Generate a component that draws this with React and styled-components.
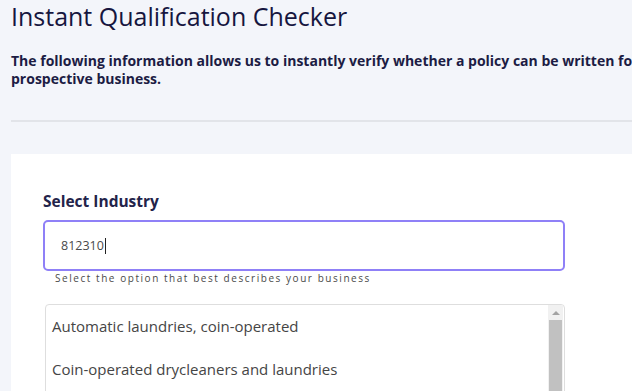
import styled, { createGlobalStyle } from "styled-components";

const GlobalStyle = createGlobalStyle`
  html, body {
    margin: 0;
    padding: 0;
    background: #ffffff;
    overflow: hidden;
  }
  body {
    font-family: "Open Sans", "Noto Sans", sans-serif;
  }
`;

const Page = styled.div`
  width: 632px;
  height: 391px;
  overflow: hidden;
  background: #f3f5fa;
  display: flex;
  flex-direction: column;
`;

const Header = styled.header`
  flex-shrink: 0;
  padding: 1px 0 0 11px;
`;

const Title = styled.h1`
  margin: 0;
  font-size: 25px;
  line-height: 30px;
  font-weight: 500;
  color: #16163f;
`;

const Intro = styled.p`
  margin: 21px 0 0;
  font-size: 14px;
  line-height: 18px;
  font-weight: 700;
  color: #1c1c44;
  white-space: nowrap;
`;

const Divider = styled.div`
  flex-shrink: 0;
  margin: 32px 0 0 11px;
  height: 2px;
  background: #e2e4e9;
`;

const Card = styled.section`
  flex: 1 0 auto;
  margin: 32px 0 0 11px;
  background: #ffffff;
  padding: 37px 0 0 32px;
  display: flex;
  flex-direction: column;
`;

const Label = styled.label`
  font-size: 15.5px;
  line-height: 20px;
  font-weight: 700;
  color: #23234a;
`;

const Input = styled.div`
  margin-top: 9px;
  width: 522px;
  height: 51px;
  box-sizing: border-box;
  border: 2px solid #8f80f7;
  border-radius: 5px;
  display: flex;
  align-items: center;
  padding-left: 16px;
  font-size: 12.5px;
  color: #4a4a4a;
`;

const Caret = styled.span`
  display: inline-block;
  width: 1px;
  height: 16px;
  margin-left: 1px;
  background: #222;
`;

const Hint = styled.div`
  margin: 0 0 0 12px;
  font-size: 10px;
  line-height: 14px;
  letter-spacing: 1.55px;
  color: #4a4a4a;
`;

const List = styled.div`
  margin: 19px 0 0 2px;
  width: 520px;
  height: 150px;
  box-sizing: border-box;
  border: 1px solid #dedede;
  border-radius: 4px;
  overflow: hidden;
  display: flex;
`;

const Options = styled.ul`
  margin: 0;
  padding: 0;
  list-style: none;
  flex: 1;
`;

const Option = styled.li`
  padding: 0 6px;
  line-height: 43px;
  font-size: 15px;
  color: #454545;
`;

const ScrollTrack = styled.div`
  width: 15px;
  margin-right: 1px;
  background: #f1f1f1;
  display: flex;
  flex-direction: column;
  align-items: center;
`;

const ScrollUp = styled.div`
  height: 15px;
  width: 100%;
  display: flex;
  align-items: center;
  justify-content: center;
  &::before {
    content: "";
    border-left: 4px solid transparent;
    border-right: 4px solid transparent;
    border-bottom: 4px solid #a3a3a3;
  }
`;

const Thumb = styled.div`
  width: 13px;
  flex: 1;
  background: #c1c1c1;
`;

const options = [
  "Automatic laundries, coin-operated",
  "Coin-operated drycleaners and laundries",
  "Laundromats",
];

export default function App() {
  return (
    <>
      <GlobalStyle />
      <Page>
        <Header>
          <Title>Instant Qualification Checker</Title>
          <Intro>
            The following information allows us to instantly verify whether a
            policy can be written for the
            <br />
            prospective business.
          </Intro>
        </Header>
        <Divider />
        <Card>
          <Label>Select Industry</Label>
          <Input>
            812310
            <Caret />
          </Input>
          <Hint>Select the option that best describes your business</Hint>
          <List>
            <Options>
              {options.map((o) => (
                <Option key={o}>{o}</Option>
              ))}
            </Options>
            <ScrollTrack>
              <ScrollUp />
              <Thumb />
            </ScrollTrack>
          </List>
        </Card>
      </Page>
    </>
  );
}
